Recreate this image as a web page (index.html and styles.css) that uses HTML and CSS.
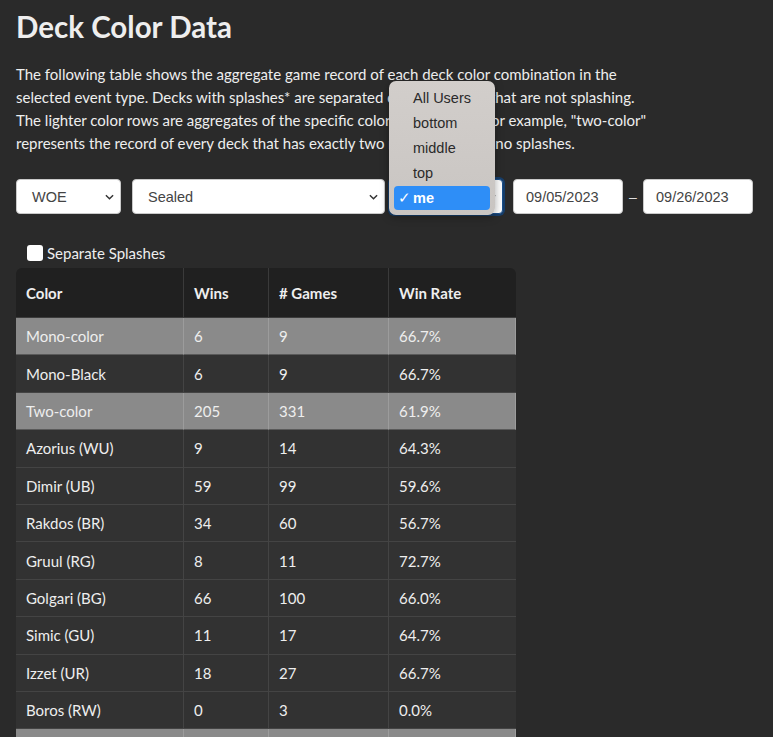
FILE: index.html
```html
<!DOCTYPE html>
<html>
<head>
<meta charset="utf-8">
<link rel="stylesheet" href="styles.css">
</head>
<body>
<div class="page">
  <h1 class="title">Deck Color Data</h1>
  <p class="intro">The following table shows the aggregate game record of each deck color combination in the selected event type. Decks with splashes* are separated out from decks that are not splashing. The lighter color rows are aggregates of the specific color combination. For example, "two-color" represents the record of every deck that has exactly two main colors and no splashes.</p>

  <div class="controls">
    <div class="sel sel-set"><span>WOE</span><svg class="chev" viewBox="0 0 10 6" width="9" height="6"><path d="M1 1l4 4 4-4" fill="none" stroke="#333" stroke-width="1.6"/></svg></div>
    <div class="sel sel-event"><span>Sealed</span><svg class="chev" viewBox="0 0 10 6" width="9" height="6"><path d="M1 1l4 4 4-4" fill="none" stroke="#333" stroke-width="1.6"/></svg></div>
    <div class="user-wrap">
      <div class="sel sel-user focused"><span>me</span><svg class="chev" viewBox="0 0 10 6" width="9" height="6"><path d="M1 1l4 4 4-4" fill="none" stroke="#333" stroke-width="1.6"/></svg></div>
      <ul class="menu">
        <li>All Users</li>
        <li>bottom</li>
        <li>middle</li>
        <li>top</li>
        <li class="active"><span class="check">✓</span>me</li>
      </ul>
    </div>
    <div class="date">09/05/2023</div>
    <span class="dash">–</span>
    <div class="date date-end">09/26/2023</div>
  </div>

  <label class="splash"><span class="box"></span>Separate Splashes</label>

  <table class="data">
    <thead>
      <tr><th class="c1">Color</th><th class="c2">Wins</th><th class="c3"># Games</th><th class="c4">Win Rate</th></tr>
    </thead>
    <tbody>
      <tr class="agg"><td>Mono-color</td><td>6</td><td>9</td><td>66.7%</td></tr>
      <tr><td>Mono-Black</td><td>6</td><td>9</td><td>66.7%</td></tr>
      <tr class="agg"><td>Two-color</td><td>205</td><td>331</td><td>61.9%</td></tr>
      <tr><td>Azorius (WU)</td><td>9</td><td>14</td><td>64.3%</td></tr>
      <tr><td>Dimir (UB)</td><td>59</td><td>99</td><td>59.6%</td></tr>
      <tr><td>Rakdos (BR)</td><td>34</td><td>60</td><td>56.7%</td></tr>
      <tr><td>Gruul (RG)</td><td>8</td><td>11</td><td>72.7%</td></tr>
      <tr><td>Golgari (BG)</td><td>66</td><td>100</td><td>66.0%</td></tr>
      <tr><td>Simic (GU)</td><td>11</td><td>17</td><td>64.7%</td></tr>
      <tr><td>Izzet (UR)</td><td>18</td><td>27</td><td>66.7%</td></tr>
      <tr><td>Boros (RW)</td><td>0</td><td>3</td><td>0.0%</td></tr>
      <tr class="agg blank"><td></td><td></td><td></td><td></td></tr>
    </tbody>
  </table>
</div>
</body>
</html>
```
FILE: styles.css
```css
html, body {
  margin: 0;
  padding: 0;
  background: #2a2a2a;
  overflow: hidden;
}
body {
  font-family: Lato, "Noto Sans", sans-serif;
  color: #eeeeee;
}
.page {
  padding: 0 16px;
}
.title {
  margin: 0;
  padding-top: 9px;
  font-size: 29.5px;
  line-height: 36px;
  font-weight: 700;
  color: #eeeeee;
}
.intro {
  margin: 18px 0 0;
  width: 645px;
  font-size: 15px;
  line-height: 23px;
  color: #eeeeee;
}
.controls {
  display: flex;
  align-items: center;
  margin-top: 24px;
  height: 35px;
}
.sel {
  box-sizing: border-box;
  height: 35px;
  background: #fff;
  border: 1px solid #c9c9c9;
  border-radius: 4px;
  display: flex;
  align-items: center;
  justify-content: space-between;
  padding: 0 6px 0 15px;
  font-family: "Liberation Sans", Arial, sans-serif;
  font-size: 14.5px;
  color: #444;
}
.sel-set { width: 105px; }
.sel-event { width: 253px; margin-left: 11px; }
.user-wrap {
  position: relative;
  margin-left: 5px;
}
.sel-user {
  width: 113px;
  border: 1px solid #1b4f8a;
  box-shadow: 0 0 0 2px #173e6a;
}
.menu {
  position: absolute;
  left: -1px;
  top: -98px;
  width: 106px;
  box-sizing: border-box;
  margin: 0;
  padding: 5px 5px;
  list-style: none;
  background: linear-gradient(#d2cecb, #c9c5c2);
  border-radius: 7px;
  box-shadow: 0 2px 8px rgba(0,0,0,0.35);
  font-family: "Liberation Sans", Arial, sans-serif;
  font-size: 14.5px;
  color: #2a2a2a;
  z-index: 5;
}
.menu li {
  height: 25px;
  line-height: 25px;
  padding-left: 19px;
  position: relative;
}
.menu li.active {
  background: #2e8ef7;
  color: #fff;
  border-radius: 4px;
  font-weight: 700;
  height: 24px;
  line-height: 24px;
}
.check {
  position: absolute;
  left: 4px;
  top: 0;
  font-weight: 400;
}
.date {
  box-sizing: border-box;
  width: 110px;
  height: 35px;
  margin-left: 10px;
  background: #fff;
  border: 1px solid #c9c9c9;
  border-radius: 4px;
  display: flex;
  align-items: center;
  padding-left: 12px;
  font-family: "Liberation Sans", Arial, sans-serif;
  font-size: 14.5px;
  color: #444;
}
.date-end { margin-left: 0; }
.dash {
  width: 20px;
  text-align: center;
  font-family: "Liberation Sans", Arial, sans-serif;
  font-size: 14px;
  color: #ddd;
}
.splash {
  display: flex;
  align-items: center;
  margin: 30px 0 0 11px;
  height: 18px;
  font-size: 15px;
  color: #eeeeee;
}
.box {
  width: 16px;
  height: 16px;
  border-radius: 3px;
  background: #fff;
  margin-right: 4px;
}
.data {
  margin-top: 6px;
  width: 500px;
  border-collapse: separate;
  border-spacing: 0;
  font-size: 15px;
  color: #eeeeee;
  border-top-left-radius: 6px;
  border-top-right-radius: 6px;
  overflow: hidden;
}
.data th {
  background: #202020;
  text-align: left;
  font-weight: 700;
  height: 50px;
  box-sizing: border-box;
  padding: 0 10px;
  border-right: 1px solid #3a3a3a;
  border-bottom: 1px solid #3c3c3c;
}
.data th:last-child, .data td:last-child { border-right: none; }
.data th.c1 { width: 168px; }
.data th.c2 { width: 85px; }
.data th.c3 { width: 120px; }
.data td {
  background: #323232;
  height: 37.4px;
  box-sizing: border-box;
  padding: 0 10px;
  border-right: 1px solid #444;
  border-bottom: 1px solid #444;
}
.data tr.agg td {
  background: #8a8a8a;
  border-right: 1px solid #9c9c9c;
  border-bottom: 1px solid #5a5a5a;
}
```
